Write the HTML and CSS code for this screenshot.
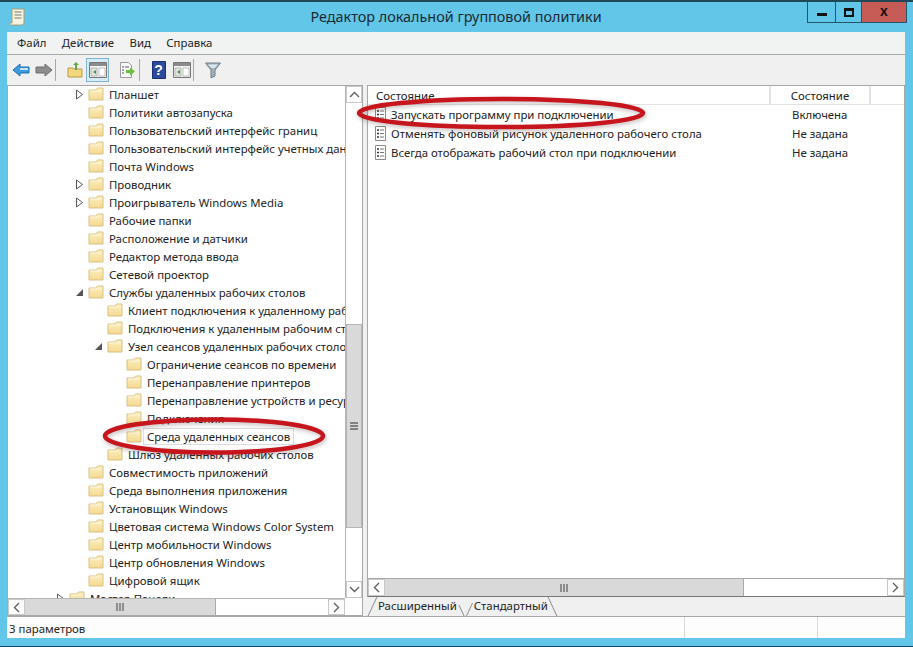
FILE: index.html
```html
<!DOCTYPE html>
<html lang="ru">
<head>
<meta charset="utf-8">
<title>Редактор локальной групповой политики</title>
<link rel="stylesheet" href="styles.css">
</head>
<body>
<svg class="defs" width="0" height="0" aria-hidden="true">
  <defs>
    <linearGradient id="fold" x1="0" y1="0" x2="0" y2="1">
      <stop offset="0" stop-color="#fdf0c4"/>
      <stop offset="1" stop-color="#f5d98f"/>
    </linearGradient>
    <symbol id="folder" viewBox="0 0 16 14">
      <path d="M1 13V3h7l1.500-2H15v12z" fill="url(#fold)" stroke="#d9c184"/>
      <path d="M2 4h12" stroke="#fff6d8"/>
    </symbol>
    <symbol id="doc" viewBox="0 0 13 15">
      <path d="M1.500.5h10v14h-10z" fill="#fff" stroke="#8a8a8a"/>
      <path d="M3 4h2M3 7.500h2M3 11h2" stroke="#333" stroke-width="1.400"/>
      <path d="M6 4h4M6 7.500h4M6 11h4" stroke="#777"/>
    </symbol>
    <symbol id="open" viewBox="0 0 9 11"><path d="M1.500 1l6 4.500-6 4.500z" fill="#fff" stroke="#555"/></symbol>
    <symbol id="expanded" viewBox="0 0 9 9"><path d="M8 1v7H1z" fill="#555"/></symbol>
    <symbol id="panel" viewBox="0 0 20 18">
      <path d="M1.500 1.500h17v15h-17z" fill="#f4f4f4" stroke="#777"/>
      <path d="M2 2h16v3H2z" fill="#8b8b8b"/>
      <path d="M3 7h6v8H3z" fill="#dce8d8" stroke="#999" stroke-width=".6"/>
      <path d="M11 7h6v8h-6z" fill="#fff" stroke="#999" stroke-width=".6"/>
      <path d="M8 9l-3 2 3 2z" fill="#4d8a5e"/>
    </symbol>
    <symbol id="chev-u" viewBox="0 0 11 7"><path d="M1 6l4.500-4.500L10 6" fill="none" stroke="#606060" stroke-width="1.400"/></symbol>
    <symbol id="chev-d" viewBox="0 0 11 7"><path d="M1 1l4.500 4.500L10 1" fill="none" stroke="#606060" stroke-width="1.400"/></symbol>
    <symbol id="chev-l" viewBox="0 0 7 11"><path d="M6 1L1.500 5.500 6 10" fill="none" stroke="#606060" stroke-width="1.400"/></symbol>
    <symbol id="chev-r" viewBox="0 0 7 11"><path d="M1 1l4.500 4.500L1 10" fill="none" stroke="#606060" stroke-width="1.400"/></symbol>
    <symbol id="grip-h" viewBox="0 0 8 8"><path d="M1 0v8M4 0v8M7 0v8" stroke="#666" stroke-width="1.300"/></symbol>
    <symbol id="grip-v" viewBox="0 0 8 8"><path d="M0 1h8M0 4h8M0 7h8" stroke="#666" stroke-width="1.300"/></symbol>
  </defs>
</svg>

<div class="window">
  <header class="titlebar">
    <svg class="app-icon" width="16" height="18" viewBox="0 0 16 18"><path d="M3 1h12v13c0 2-1 3-3 3H2c-1 0-2-1-1-2h2z" fill="#f7f3df" stroke="#a99f7d"/><path d="M5.500 4h7M5.500 7h7M5.500 10h7" stroke="#7d7d70"/></svg>
    <h1 class="title">Редактор локальной групповой политики</h1>
    <div class="win-controls">
      <button class="win-btn min"><span class="min-glyph"></span></button>
      <button class="win-btn max"><span class="max-glyph"></span></button>
      <button class="win-btn close">x</button>
    </div>
  </header>

  <div class="client">
    <nav class="menubar">
      <span class="menu-item">Файл</span>
      <span class="menu-item">Действие</span>
      <span class="menu-item">Вид</span>
      <span class="menu-item">Справка</span>
    </nav>

    <div class="toolbar">
      <span class="tool"><svg width="18" height="14" viewBox="0 0 18 14"><path d="M1 7l7-6v3h9v6H8v3z" fill="#3f9bdc" stroke="#1d6fb0"/><path d="M8 5h8v2H8z" fill="#bfe3f7"/></svg></span>
      <span class="tool"><svg width="18" height="14" viewBox="0 0 18 14"><path d="M17 7l-7-6v3H1v6h9v3z" fill="#8d8d8d" stroke="#6d6d6d"/></svg></span>
      <span class="tool-sep"></span>
      <span class="tool"><svg width="16" height="16" viewBox="0 0 16 16"><path d="M1 6h5l1 1h8v8H1z" fill="#f4d67f" stroke="#b9994a"/><path d="M8 8V3H6l3-3 3 3h-2v5z" fill="#62a83e"/></svg></span>
      <span class="tool tool-active"><svg width="20" height="18"><use href="#panel"/></svg></span>
      <span class="tool tool-gap"><svg width="18" height="17" viewBox="0 0 18 17"><path d="M1.500.5h8l3 3v12h-11z" fill="#fafafa" stroke="#999"/><path d="M3 5h2M3 8h2M3 11h2M6 5h4" stroke="#555"/><path d="M7 8h4V5.500l5 4-5 4V11H7z" fill="#6fbf3f"/></svg></span>
      <span class="tool-sep"></span>
      <span class="tool"><svg width="14" height="18" viewBox="0 0 14 18"><path d="M.5.500h13v17H.5z" fill="#2a4a9e" stroke="#1a2f72"/></svg><b class="help-q">?</b></span>
      <span class="tool"><svg width="20" height="18"><use href="#panel"/></svg></span>
      <span class="tool-sep"></span>
      <span class="tool"><svg width="16" height="16" viewBox="0 0 16 16"><path d="M.5 1h15L10 8v6l-4 2V8z" fill="#9fb1ba" stroke="#6f7f88"/><path d="M3 2.500h10L9.500 6h-3z" fill="#dde5e9"/></svg></span>
    </div>

    <div class="panes">
      <section class="left-pane">
        <div class="left-top">
          <ul class="tree">
            <li class="row l0"><svg class="tw" width="9" height="11"><use href="#open"/></svg><svg class="fo" width="16" height="14"><use href="#folder"/></svg><span>Планшет</span></li>
            <li class="row l0"><i class="tw"></i><svg class="fo" width="16" height="14"><use href="#folder"/></svg><span>Политики автозапуска</span></li>
            <li class="row l0"><i class="tw"></i><svg class="fo" width="16" height="14"><use href="#folder"/></svg><span>Пользовательский интерфейс границ</span></li>
            <li class="row l0"><i class="tw"></i><svg class="fo" width="16" height="14"><use href="#folder"/></svg><span>Пользовательский интерфейс учетных данных</span></li>
            <li class="row l0"><i class="tw"></i><svg class="fo" width="16" height="14"><use href="#folder"/></svg><span>Почта Windows</span></li>
            <li class="row l0"><svg class="tw" width="9" height="11"><use href="#open"/></svg><svg class="fo" width="16" height="14"><use href="#folder"/></svg><span>Проводник</span></li>
            <li class="row l0"><svg class="tw" width="9" height="11"><use href="#open"/></svg><svg class="fo" width="16" height="14"><use href="#folder"/></svg><span>Проигрыватель Windows Media</span></li>
            <li class="row l0"><i class="tw"></i><svg class="fo" width="16" height="14"><use href="#folder"/></svg><span>Рабочие папки</span></li>
            <li class="row l0"><i class="tw"></i><svg class="fo" width="16" height="14"><use href="#folder"/></svg><span>Расположение и датчики</span></li>
            <li class="row l0"><i class="tw"></i><svg class="fo" width="16" height="14"><use href="#folder"/></svg><span>Редактор метода ввода</span></li>
            <li class="row l0"><i class="tw"></i><svg class="fo" width="16" height="14"><use href="#folder"/></svg><span>Сетевой проектор</span></li>
            <li class="row l0"><svg class="tw" width="9" height="9"><use href="#expanded"/></svg><svg class="fo" width="16" height="14"><use href="#folder"/></svg><span>Службы удаленных рабочих столов</span></li>
            <li class="row l1"><i class="tw"></i><svg class="fo" width="16" height="14"><use href="#folder"/></svg><span>Клиент подключения к удаленному рабочему столу</span></li>
            <li class="row l1"><i class="tw"></i><svg class="fo" width="16" height="14"><use href="#folder"/></svg><span>Подключения к удаленным рабочим столам</span></li>
            <li class="row l1"><svg class="tw" width="9" height="9"><use href="#expanded"/></svg><svg class="fo" width="16" height="14"><use href="#folder"/></svg><span>Узел сеансов удаленных рабочих столов</span></li>
            <li class="row l2"><i class="tw"></i><svg class="fo" width="16" height="14"><use href="#folder"/></svg><span>Ограничение сеансов по времени</span></li>
            <li class="row l2"><i class="tw"></i><svg class="fo" width="16" height="14"><use href="#folder"/></svg><span>Перенаправление принтеров</span></li>
            <li class="row l2"><i class="tw"></i><svg class="fo" width="16" height="14"><use href="#folder"/></svg><span>Перенаправление устройств и ресурсов</span></li>
            <li class="row l2"><i class="tw"></i><svg class="fo" width="16" height="14"><use href="#folder"/></svg><span>Подключения</span></li>
            <li class="row l2"><i class="tw"></i><svg class="fo" width="16" height="14"><use href="#folder"/></svg><span class="selected">Среда удаленных сеансов</span></li>
            <li class="row l1"><i class="tw"></i><svg class="fo" width="16" height="14"><use href="#folder"/></svg><span>Шлюз удаленных рабочих столов</span></li>
            <li class="row l0"><i class="tw"></i><svg class="fo" width="16" height="14"><use href="#folder"/></svg><span>Совместимость приложений</span></li>
            <li class="row l0"><i class="tw"></i><svg class="fo" width="16" height="14"><use href="#folder"/></svg><span>Среда выполнения приложения</span></li>
            <li class="row l0"><i class="tw"></i><svg class="fo" width="16" height="14"><use href="#folder"/></svg><span>Установщик Windows</span></li>
            <li class="row l0"><i class="tw"></i><svg class="fo" width="16" height="14"><use href="#folder"/></svg><span>Цветовая система Windows Color System</span></li>
            <li class="row l0"><i class="tw"></i><svg class="fo" width="16" height="14"><use href="#folder"/></svg><span>Центр мобильности Windows</span></li>
            <li class="row l0"><i class="tw"></i><svg class="fo" width="16" height="14"><use href="#folder"/></svg><span>Центр обновления Windows</span></li>
            <li class="row l0"><i class="tw"></i><svg class="fo" width="16" height="14"><use href="#folder"/></svg><span>Цифровой ящик</span></li>
            <li class="row lm"><svg class="tw" width="9" height="11"><use href="#open"/></svg><svg class="fo" width="16" height="14"><use href="#folder"/></svg><span>Мастер Панели</span></li>
          </ul>
          <div class="vscroll">
            <span class="sb-btn"><svg width="11" height="7"><use href="#chev-u"/></svg></span>
            <div class="vtrack">
              <div class="vspace"></div>
              <div class="vthumb"><svg width="8" height="8"><use href="#grip-v"/></svg></div>
              <div class="vspace2"></div>
            </div>
            <span class="sb-btn"><svg width="11" height="7"><use href="#chev-d"/></svg></span>
          </div>
        </div>
        <div class="hscroll">
          <span class="sb-btn h"><svg width="7" height="11"><use href="#chev-l"/></svg></span>
          <div class="hthumb left-thumb"><svg width="8" height="8"><use href="#grip-h"/></svg></div>
          <div class="hspace"></div>
          <span class="sb-btn h"><svg width="7" height="11"><use href="#chev-r"/></svg></span>
        </div>
      </section>

      <section class="right-pane">
        <div class="list">
          <div class="list-head">
            <div class="col-name">Состояние</div>
            <div class="col-state">Состояние</div>
            <div class="col-rest"></div>
          </div>
          <div class="list-row"><svg class="doc" width="13" height="15"><use href="#doc"/></svg><span class="cell-name">Запускать программу при подключении</span><span class="cell-state">Включена</span></div>
          <div class="list-row"><svg class="doc" width="13" height="15"><use href="#doc"/></svg><span class="cell-name">Отменять фоновый рисунок удаленного рабочего стола</span><span class="cell-state">Не задана</span></div>
          <div class="list-row"><svg class="doc" width="13" height="15"><use href="#doc"/></svg><span class="cell-name">Всегда отображать рабочий стол при подключении</span><span class="cell-state">Не задана</span></div>
        </div>
        <div class="hscroll right">
          <span class="sb-btn h"><svg width="7" height="11"><use href="#chev-l"/></svg></span>
          <div class="hthumb right-thumb"><svg width="8" height="8"><use href="#grip-h"/></svg></div>
          <div class="hspace"></div>
          <span class="sb-btn h"><svg width="7" height="11"><use href="#chev-r"/></svg></span>
        </div>
        <div class="tabs">
          <span class="tab tab-a">Расширенный</span>
          <span class="tab tab-b">Стандартный</span>
        </div>
      </section>
    </div>

    <footer class="status">
      <span class="status-main">3 параметров</span>
      <span class="status-cell"></span>
      <span class="status-cell last"></span>
    </footer>
  </div>

  <svg class="marks" width="913" height="647" viewBox="0 0 913 647" aria-hidden="true">
    <ellipse cx="502" cy="115" rx="142" ry="14" class="mark-shadow"/>
    <ellipse cx="501" cy="113" rx="142" ry="14" class="mark"/>
    <ellipse cx="215" cy="438" rx="109" ry="16.500" class="mark-shadow"/>
    <ellipse cx="214" cy="436" rx="109" ry="16.500" class="mark"/>
  </svg>
</div>
</body>
</html>
```

FILE: styles.css
```css
* { box-sizing: border-box; }
html, body { margin: 0; padding: 0; }
body {
  width: 913px;
  height: 647px;
  overflow: hidden;
  font-family: "Noto Sans", "Open Sans", sans-serif;
  font-size: 11.4px;
  color: #222;
}
.defs { position: absolute; }
.window {
  position: relative;
  width: 913px;
  height: 647px;
  display: flex;
  flex-direction: column;
  background: #62c6e8;
  border-top: 2px solid #1f4756;
  border-bottom: 1px solid #1f4756;
}
.titlebar {
  height: 30px;
  flex: none;
  display: flex;
  align-items: flex-start;
  padding-left: 9px;
}
.app-icon { margin-top: 6px; flex: none; }
.title {
  flex: 1;
  margin: 5px 0 0;
  padding-left: 80px;
  font-size: 14.4px;
  font-weight: 400;
  line-height: 20px;
  text-align: center;
  color: #1a2a33;
}
.win-controls { display: flex; margin-right: 6px; flex: none; }
.win-btn {
  height: 21px;
  padding: 0;
  border: 1px solid #24566a;
  border-top: 0;
  display: flex;
  align-items: center;
  justify-content: center;
  background: #62c6e8;
  font-family: "Liberation Sans", sans-serif;
  font-weight: 700;
  font-size: 14px;
  color: #111;
}
.win-btn.min { width: 28px; border-right: 0; }
.win-btn.max { width: 26px; border-right: 0; }
.win-btn.close { width: 46px; background: #c75c56; padding-bottom: 3px; }
.min-glyph { width: 10px; height: 3px; background: #111; margin-top: 5px; }
.max-glyph { width: 10px; height: 9px; border: 2px solid #111; border-top-width: 3px; }

.client {
  flex: 1;
  margin: 0 8px 8px 7px;
  display: flex;
  flex-direction: column;
  background: #f0f0f0;
  min-height: 0;
}
.menubar {
  height: 23px;
  flex: none;
  display: flex;
  align-items: center;
  gap: 15.4px;
  padding: 0 0 2px 10px;
  background: #f1f2f2;
  border-bottom: 1px solid #a8a8a8;
}
.toolbar {
  height: 30px;
  flex: none;
  display: flex;
  align-items: center;
  padding-left: 2px;
  background: #f0f0f0;
}
.tool {
  position: relative;
  width: 23px;
  height: 24px;
  display: flex;
  align-items: center;
  justify-content: center;
  flex: none;
}
.tool-active { background: #d7ebf6; border: 1px solid #7fb5d3; }
.tool-gap { margin-left: 7px; }
.tool-sep { width: 1px; height: 22px; background: #a8a8a8; margin-right: 7px; flex: none; }
.help-q {
  position: absolute;
  inset: 0;
  text-align: center;
  color: #fff;
  font: 700 14px/24px "Liberation Sans", sans-serif;
}

.panes {
  flex: 1;
  min-height: 0;
  display: flex;
  gap: 4px;
  background: #f0f0f0;
}
.left-pane {
  width: 356px;
  flex: none;
  display: flex;
  flex-direction: column;
  background: #fff;
  border: 1px solid #a8a8a8;
}
.left-top { flex: 1; min-height: 0; display: flex; }
.tree {
  flex: 1;
  min-width: 0;
  list-style: none;
  margin: 0;
  padding: 0;
  overflow: hidden;
}
.row {
  height: 18px;
  padding-bottom: 2px;
  display: flex;
  align-items: center;
  white-space: nowrap;
  overflow: hidden;
}
.row.l0 { padding-left: 67px; }
.row.l1 { padding-left: 86px; }
.row.l2 { padding-left: 105px; }
.row.lm { padding-left: 48px; }
.tw { width: 9px; flex: none; margin-right: 4px; display: block; }
i.tw { height: 9px; }
.fo { flex: none; margin-right: 5px; }
.selected { outline: 1px solid #dcdcdc; padding: 0 3px; margin-left: -3px; line-height: 15px; }

.vscroll {
  width: 17px;
  flex: none;
  display: flex;
  flex-direction: column;
  background: #fff;
  border-left: 1px solid #b5b5b5;
}
.sb-btn {
  height: 17px;
  flex: none;
  display: flex;
  align-items: center;
  justify-content: center;
  background: #fff;
  border: 1px solid #c8c8c8;
}
.sb-btn.h { width: 17px; }
.vtrack { flex: 1; display: flex; flex-direction: column; min-height: 0; }
.vspace { height: 221px; flex: none; background: #fff; }
.vthumb {
  height: 204px;
  flex: none;
  display: flex;
  align-items: center;
  justify-content: center;
  background: #d9d9d9;
  border: 1px solid #b5b5b5;
}
.vspace2 { flex: 1; background: #fff; }

.hscroll {
  height: 17px;
  flex: none;
  display: flex;
  background: #fff;
  border-top: 1px solid #b5b5b5;
  margin-right: 17px;
}
.hscroll .sb-btn { height: 16px; }
.hthumb {
  flex: none;
  display: flex;
  align-items: center;
  justify-content: center;
  background: #d9d9d9;
  border-right: 1px solid #aaa;
}
.left-thumb { width: 191px; }
.right-thumb { width: 359px; }
.hspace { flex: 1; }

.right-pane {
  flex: 1;
  min-width: 0;
  display: flex;
  flex-direction: column;
  background: #f0f0f0;
}
.list {
  flex: 1;
  min-height: 0;
  background: #fff;
  border: 1px solid #a8a8a8;
  border-bottom: 0;
}
.list-head {
  height: 19px;
  display: flex;
  border-bottom: 1px solid #e4e4e4;
  line-height: 19px;
}
.col-name { width: 403px; padding-left: 8px; border-right: 2px solid #e4e4e4; }
.col-state { width: 100px; text-align: center; border-right: 2px solid #e4e4e4; }
.col-rest { flex: 1; }
.list-row {
  height: 19px;
  display: flex;
  align-items: center;
  white-space: nowrap;
}
.doc { flex: none; margin: 0 4px 0 6px; }
.cell-name { width: 401px; flex: none; overflow: hidden; }
.hscroll.right {
  height: 19px;
  margin-right: 0;
  border: 1px solid #a8a8a8;
  border-bottom-color: #777;
}
.hscroll.right .sb-btn { height: 17px; }
.tabs {
  height: 19px;
  flex: none;
  display: flex;
  align-items: flex-start;
  gap: 17px;
  padding-left: 11px;
  background: #f0f0f0;
}
.tab {
  position: relative;
  line-height: 18px;
  height: 19px;
  flex: none;
}
.tab::before,
.tab::after {
  content: "";
  position: absolute;
  top: 0;
  bottom: 0;
  width: 1px;
  background: #8a8a8a;
}
.tab::before { left: -6px; transform: skewX(-25deg); }
.tab::after { right: -5px; transform: skewX(25deg); }
.tab-a::after { height: 11px; top: 8px; bottom: auto; right: -5px; }
.tab-b::before { height: 13px; top: 6px; bottom: auto; left: -5px; }

.status {
  height: 22px;
  flex: none;
  display: flex;
  background: #fdfdfd;
  border-top: 1px solid #a8a8a8;
  line-height: 23px;
}
.status-main { width: 678px; flex: none; padding-left: 2px; border-right: 1px solid #d9d9d9; }
.status-cell { width: 133px; flex: none; border-right: 1px solid #d9d9d9; }
.status-cell.last { flex: 1; border-right: 0; }

.marks { position: absolute; left: 0; top: -2px; pointer-events: none; }
.mark { fill: none; stroke: #c6151d; stroke-width: 4.5px; }
.mark-shadow { fill: none; stroke: rgba(70, 40, 40, .28); stroke-width: 5px; filter: blur(2px); }
```
